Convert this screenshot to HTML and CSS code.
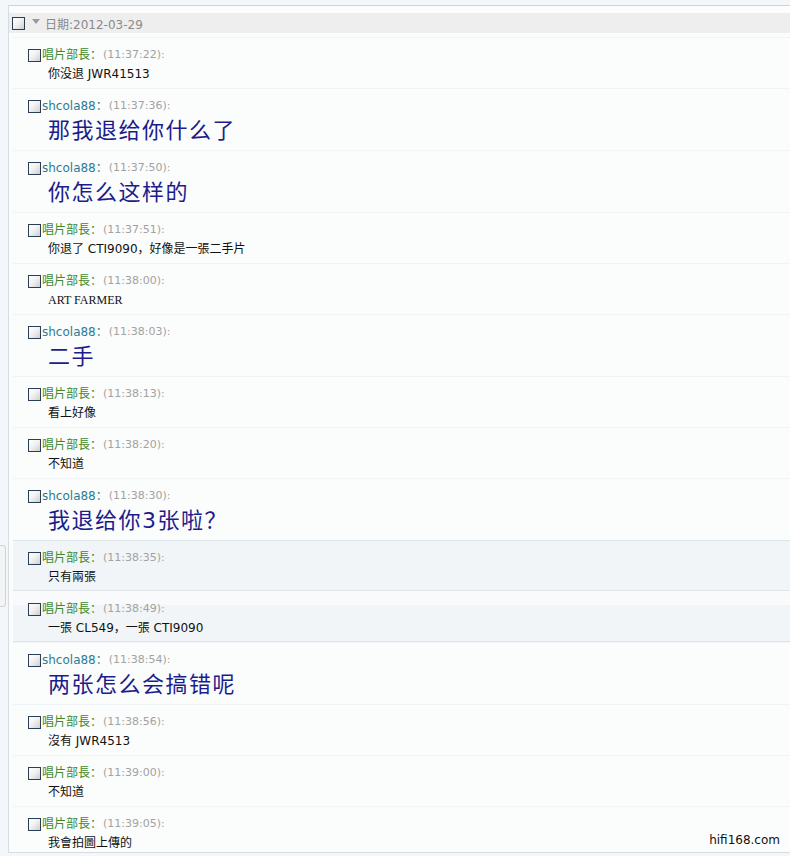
FILE: index.html
```html
<!DOCTYPE html>
<html lang="zh-CN">
<head>
    <meta charset="UTF-8">
    <meta name="viewport" content="width=device-width, initial-scale=1.0">
    <title>聊天记录</title>
    <link rel="stylesheet" href="styles.css">
</head>
<body>

<div class="side-handle"></div>

<div class="wrap">
    <div class="date-row">
        <span class="chk"></span>
        <span class="arrow"></span>
        <span class="date-text">日期:2012-03-29</span>
    </div>
    <div class="msgs" id="msgs">
        <!-- 消息由脚本生成 -->
    </div>
</div>

<div class="mark">hifi168.com</div>

<script>
    // 聊天数据
    const data = [
        { who: 'a', time: '11:37:22', text: '你没退 JWR41513' },
        { who: 'b', time: '11:37:36', text: '那我退给你什么了', big: true },
        { who: 'b', time: '11:37:50', text: '你怎么这样的', big: true },
        { who: 'a', time: '11:37:51', text: '你退了 CTI9090，好像是一張二手片' },
        { who: 'a', time: '11:38:00', text: 'ART FARMER', serif: true },
        { who: 'b', time: '11:38:03', text: '二手', big: true },
        { who: 'a', time: '11:38:13', text: '看上好像' },
        { who: 'a', time: '11:38:20', text: '不知道' },
        { who: 'b', time: '11:38:30', text: '我退给你3张啦？', big: true },
        { who: 'a', time: '11:38:35', text: '只有兩張', hl: true },
        { who: 'a', time: '11:38:49', text: '一張 CL549，一張 CTI9090', hl: true },
        { who: 'b', time: '11:38:54', text: '两张怎么会搞错呢', big: true },
        { who: 'a', time: '11:38:56', text: '沒有 JWR4513' },
        { who: 'a', time: '11:39:00', text: '不知道' },
        { who: 'a', time: '11:39:05', text: '我會拍圖上傳的' }
    ];

    const names = { a: '唱片部長', b: 'shcola88' };

    function createMsg(item) {
        const row = document.createElement('div');
        row.className = 'msg';
        if (item.hl) {
            row.classList.add('hl');
        }

        const head = document.createElement('div');
        head.className = 'head';
        head.innerHTML =
            '<span class="chk"></span>' +
            '<span class="name ' + (item.who === 'a' ? 'green' : 'teal') + '">' + names[item.who] + '：</span>' +
            '<span class="time">(' + item.time + '):</span>';

        const text = document.createElement('div');
        text.className = 'text';
        if (item.big) {
            text.classList.add('big');
        }
        if (item.serif) {
            text.classList.add('serif');
        }
        text.textContent = item.text;

        row.appendChild(head);
        row.appendChild(text);
        return row;
    }

    const list = document.getElementById('msgs');
    data.forEach(item => {
        list.appendChild(createMsg(item));
    });
</script>

</body>
</html>
```

FILE: styles.css
```css
body {
    margin: 0;
    background-color: #f4f7f9;
    font-family: "DejaVu Sans", "Noto Sans CJK SC", sans-serif;
    font-size: 12px;
    height: 856px;
    overflow: hidden;
    position: relative;
}
.wrap {
    margin: 5px 0 0 8px;
    height: 848px;
    border-top: 1px solid #cfd5da;
    border-left: 1px solid #d6dce1;
    border-bottom: 1px solid #d6dce1;
    background-color: #fbfcfc;
    box-sizing: border-box;
    overflow: hidden;
}
.date-row {
    margin-top: 7px;
    height: 20px;
    background-color: #eeeeee;
    display: flex;
    align-items: center;
    padding-left: 3px;
}
.chk {
    display: inline-block;
    width: 11px;
    height: 11px;
    border: 1px solid #2a3f55;
    background: linear-gradient(135deg, #ffffff 0%, #f2f2f2 45%, #cfcfcf 100%);
    flex-shrink: 0;
}
.arrow {
    width: 0;
    height: 0;
    margin: 0 5px 0 7px;
    border-left: 4px solid transparent;
    border-right: 4px solid transparent;
    border-top: 5px solid #9a9a9a;
    position: relative;
    top: -2px;
}
.date-text {
    color: #8a8a8a;
    font-size: 12px;
}
.msgs {
    margin-left: 4px;
    margin-top: 4px;
}
.msg {
    padding: 9px 0 5px 15px;
    border-top: 1px solid #f1f4f6;
}
.msg.hl {
    padding-bottom: 4px;
    background-color: #f1f5f8;
    border-top: 1px solid #dde4ea;
    border-bottom: 1px solid #dde4ea;
}
.msg.hl + .msg.hl {
    border-top: none;
    padding-top: 10px;
    background: linear-gradient(#f8fafb 0, #f8fafb 14px, #f1f5f8 14px);
}
.head {
    display: flex;
    align-items: center;
    height: 16px;
    line-height: 16px;
}
.head .chk {
    margin-right: 1px;
}
.name {
    font-size: 12px;
}
.green {
    color: #3e8a2c;
}
.teal {
    color: #2f7b8f;
}
.time {
    color: #a2a2a2;
    font-size: 11px;
    margin-left: 1px;
}
.text {
    margin: 3px 0 0 20px;
    height: 17px;
    line-height: 17px;
    color: #111111;
}
.text.big {
    height: 28px;
    font-size: 22px;
    line-height: 28px;
    letter-spacing: 1.5px;
    color: #1c1c8c;
}
.text.serif {
    font-family: "Liberation Serif", serif;
}
.mark {
    position: absolute;
    right: 10px;
    bottom: 9px;
    font-size: 12px;
    color: #111111;
}
.side-handle {
    position: absolute;
    left: -3px;
    top: 545px;
    width: 7px;
    height: 60px;
    border: 1px solid #cfd3d6;
    border-radius: 3px;
    background-color: #f3f4f5;
}
```
